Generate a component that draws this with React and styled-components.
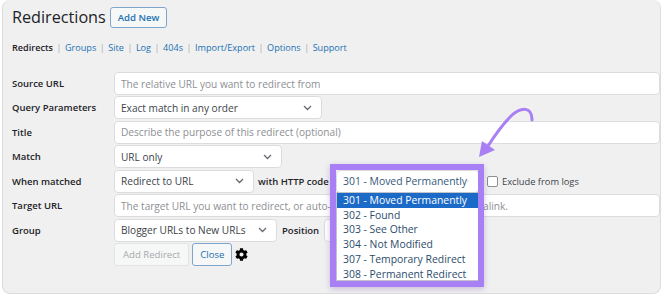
import React from 'react';
import styled, { createGlobalStyle } from 'styled-components';
import { FaCog } from 'react-icons/fa';

const GlobalStyle = createGlobalStyle`
  body {
    margin: 0;
    background: #ffffff;
    font-family: "Open Sans", "Noto Sans", sans-serif;
  }
`;

const Panel = styled.div`
  position: relative;
  box-sizing: border-box;
  width: 659px;
  height: 294px;
  margin-left: 2px;
  padding: 7px 0 0 9px;
  background: #f0f0f1;
  border: 1px solid #dcdcde;
  border-top: none;
  border-radius: 8px;
  overflow: hidden;
`;

const Header = styled.div`
  display: flex;
  align-items: center;
  gap: 4px;
  height: 21px;
`;

const Title = styled.h1`
  margin: 0;
  font-size: 16.2px;
  font-weight: 400;
  color: #1d2327;
  line-height: 21px;
`;

const Button = styled.button`
  box-sizing: border-box;
  height: ${(p) => p.$h || 22}px;
  padding: 0 ${(p) => p.$px || 6}px;
  font-family: inherit;
  font-size: ${(p) => p.$fs || 9.6}px;
  font-weight: ${(p) => p.$weight || 400};
  color: ${(p) => (p.$disabled ? '#a7aaad' : '#2271b1')};
  background: #f6f7f7;
  border: 1px solid ${(p) => (p.$disabled ? '#e2e4e7' : '#7ea6cc')};
  border-radius: 3px;
`;

const Nav = styled.div`
  display: flex;
  align-items: center;
  margin-top: 11px;
  height: 16px;
  font-size: 9.1px;
  color: #a7aaad;
`;

const NavItem = styled.span`
  color: ${(p) => (p.$current ? '#1d2327' : '#2271b1')};
  font-weight: ${(p) => (p.$current ? 600 : 400)};
`;

const Sep = styled.span`
  margin: 0 3.5px;
`;

const Form = styled.div`
  display: grid;
  grid-template-columns: 102px 1fr;
  grid-auto-rows: 23px;
  row-gap: 1.45px;
  margin-top: 17px;
`;

const Label = styled.div`
  align-self: center;
  font-size: 9.5px;
  font-weight: 600;
  color: #1d2327;
`;

const Field = styled.div`
  display: flex;
  align-items: center;
  gap: ${(p) => p.$gap || 4}px;
  min-width: 0;
`;

const TextInput = styled.div`
  box-sizing: border-box;
  flex: 1;
  height: 23px;
  padding: 0 6px;
  display: flex;
  align-items: center;
  background: #fff;
  border: 1px solid #dcdcde;
  border-radius: 4px;
  font-size: 10.1px;
  color: ${(p) => (p.$placeholder ? '#8c8f94' : '#3c434a')};
  white-space: nowrap;
  overflow: hidden;
`;

const Select = styled.div`
  box-sizing: border-box;
  flex: none;
  width: ${(p) => p.$w}px;
  height: 23px;
  padding: 0 9px 0 6px;
  display: flex;
  align-items: center;
  justify-content: space-between;
  background: #fff;
  border: 1px solid #dcdcde;
  border-radius: 4px;
  font-size: ${(p) => p.$fs || 10.1}px;
  color: ${(p) => p.$color || '#3c434a'};
  white-space: nowrap;
`;

const Inline = styled.span`
  flex: none;
  width: ${(p) => (p.$w ? `${p.$w}px` : 'auto')};
  font-size: ${(p) => (p.$bold ? 9.5 : 9.3)}px;
  font-weight: ${(p) => (p.$bold ? 600 : 400)};
  color: ${(p) => (p.$bold ? '#1d2327' : '#3c434a')};
  white-space: nowrap;
`;

const Picker = styled.div`
  position: relative;
  z-index: 2;
`;

const Highlight = styled.div`
  position: absolute;
  top: -6px;
  left: -6px;
  width: 142px;
  height: 111px;
  border: 6px solid #a87ff4;
  box-shadow: 0 2px 6px rgba(80, 40, 140, 0.25);
  pointer-events: none;
`;

const DropList = styled.ul`
  position: absolute;
  top: 22px;
  left: 0;
  box-sizing: border-box;
  width: 143px;
  height: 89px;
  margin: 0;
  padding: 0;
  list-style: none;
  background: #fff;
  border: 1px solid #c3c4c7;
  overflow: hidden;
`;

const Option = styled.li`
  height: 14.8px;
  line-height: 14.8px;
  padding: 0 6px;
  font-size: 10.4px;
  color: ${(p) => (p.$active ? '#fff' : '#2c4c6b')};
  background: ${(p) => (p.$active ? '#1c6ac7' : 'transparent')};
  white-space: nowrap;
`;

const Checkbox = styled.span`
  box-sizing: border-box;
  flex: none;
  width: 11px;
  height: 11px;
  margin-left: 4px;
  background: #fff;
  border: 1px solid #8c8f94;
  border-radius: 2px;
`;

const NumberInput = styled.div`
  box-sizing: border-box;
  flex: none;
  width: 60px;
  height: 23px;
  padding: 0 6px;
  display: flex;
  align-items: center;
  background: #fff;
  border: 1px solid #dcdcde;
  border-radius: 4px;
  font-size: 10.1px;
  color: #3c434a;
`;

const Gear = styled(FaCog)`
  flex: none;
  margin-left: 0;
  color: #000;
`;

const Arrow = styled.svg`
  position: absolute;
  left: 468px;
  top: 100px;
  width: 70px;
  height: 66px;
  overflow: visible;
`;

function Chevron({ color = '#646970' }) {
  return (
    <svg width="9" height="6" viewBox="0 0 9 6">
      <polyline points="1,1 4.5,4.5 8,1" fill="none" stroke={color} strokeWidth="1.3" />
    </svg>
  );
}

const navItems = ['Groups', 'Site', 'Log', '404s', 'Import/Export', 'Options', 'Support'];

const httpCodes = [
  '301 - Moved Permanently',
  '302 - Found',
  '303 - See Other',
  '304 - Not Modified',
  '307 - Temporary Redirect',
  '308 - Permanent Redirect',
];

export default function App() {
  return (
    <>
      <GlobalStyle />
      <Panel>
        <Header>
          <Title>Redirections</Title>
          <Button $h={21} $px={7} $fs={9.6} $weight={600}>Add New</Button>
        </Header>

        <Nav>
          <NavItem $current>Redirects</NavItem>
          {navItems.map((item) => (
            <React.Fragment key={item}>
              <Sep>|</Sep>
              <NavItem>{item}</NavItem>
            </React.Fragment>
          ))}
        </Nav>

        <Form>
          <Label>Source URL</Label>
          <Field>
            <TextInput $placeholder>The relative URL you want to redirect from</TextInput>
          </Field>

          <Label>Query Parameters</Label>
          <Field>
            <Select $w={208}>Exact match in any order<Chevron /></Select>
          </Field>

          <Label>Title</Label>
          <Field>
            <TextInput $placeholder>Describe the purpose of this redirect (optional)</TextInput>
          </Field>

          <Label>Match</Label>
          <Field>
            <Select $w={168}>URL only<Chevron /></Select>
          </Field>

          <Label>When matched</Label>
          <Field>
            <Select $w={140}>Redirect to URL<Chevron /></Select>
            <Inline $bold $w={74}>with HTTP code</Inline>
            <Picker>
              <Select $w={143} $fs={10.4} $color="#35597a">
                301 - Moved Permanently<Chevron color="#1d2327" />
              </Select>
              <DropList>
                {httpCodes.map((code, i) => (
                  <Option key={code} $active={i === 0}>{code}</Option>
                ))}
              </DropList>
              <Highlight />
            </Picker>
            <Checkbox />
            <Inline>Exclude from logs</Inline>
          </Field>

          <Label>Target URL</Label>
          <Field>
            <TextInput $placeholder>
              The target URL you want to redirect, or auto-complete on post name or permalink.
            </TextInput>
          </Field>

          <Label>Group</Label>
          <Field $gap={5}>
            <Select $w={163}>Blogger URLs to New URLs<Chevron /></Select>
            <Inline $bold>Position</Inline>
            <NumberInput>0</NumberInput>
          </Field>

          <span />
          <Field $gap={3}>
            <Button $disabled $h={23} $px={8}>Add Redirect</Button>
            <Button $h={23} $px={7}>Close</Button>
            <Gear size={13} />
          </Field>
        </Form>

        <Arrow viewBox="468 100 70 66">
          <path
            d="M529 120 C 529 106, 518 107, 508 116 C 499 125, 492 135, 485 146"
            fill="none"
            stroke="#a87ff4"
            strokeWidth="3"
            strokeLinecap="round"
          />
          <polygon points="476,157 479,141 492,150" fill="#a87ff4" />
        </Arrow>
      </Panel>
    </>
  );
}
